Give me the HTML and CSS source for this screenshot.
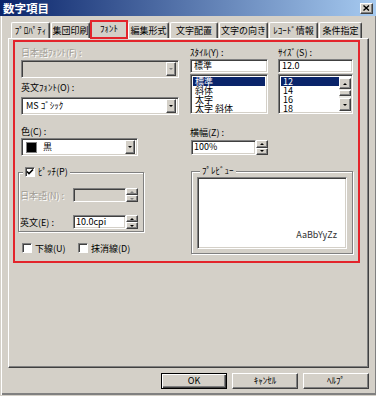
FILE: index.html
```html
<!DOCTYPE html>
<html lang="ja">
<head>
  <meta charset="UTF-8" />
  <title>数字項目</title>
  <link rel="stylesheet" href="styles.css">
</head>
<body>
  <div class="window">
    <div class="titlebar">
      <span class="title">数字項目</span>
      <span class="close">
        <svg width="7" height="6" viewBox="0 0 7 6"><path d="M0.5 0.5 L6 5.5 M6 0.5 L0.5 5.5" stroke="#000" stroke-width="1.4"/></svg>
      </span>
    </div>

    <div class="main">
      <div class="tabs">
        <div class="tab">ﾌﾟﾛﾊﾟﾃｨ</div>
        <div class="tab">集団印刷</div>
        <div class="tab active">ﾌｫﾝﾄ</div>
        <div class="tab">編集形式</div>
        <div class="tab">文字配置</div>
        <div class="tab">文字の向き</div>
        <div class="tab">ﾚｺｰﾄﾞ情報</div>
        <div class="tab">条件指定</div>
      </div>

      <div class="panel">
        <div class="frame">
          <div class="col-left">
            <div class="lbl disabled">日本語ﾌｫﾝﾄ(F) :</div>
            <div class="combo off first">
              <span class="val"></span>
              <span class="drop"><i class="arrow down grey"></i></span>
            </div>

            <div class="lbl gap-a">英文ﾌｫﾝﾄ(O) :</div>
            <div class="combo second">
              <span class="val">MS ｺﾞｼｯｸ</span>
              <span class="drop"><i class="arrow down"></i></span>
            </div>

            <div class="lbl gap-b">色(C) :</div>
            <div class="combo color">
              <span class="swatch"></span>
              <span class="val">黒</span>
              <span class="drop"><i class="arrow down"></i></span>
            </div>

            <fieldset class="group pitch">
              <legend>
                <span class="chk on">
                  <svg width="8" height="8" viewBox="0 0 8 8"><path d="M1 3.5 L3 5.5 L7 1.5" fill="none" stroke="#000" stroke-width="1.6"/></svg>
                </span>
                <span>ﾋﾟｯﾁ(P)</span>
              </legend>
              <div class="row">
                <span class="row-lbl disabled">日本語(N) :</span>
                <span class="field off"></span>
                <span class="spin"><span class="sb"><i class="arrow up grey"></i></span><span class="sb"><i class="arrow down grey"></i></span></span>
              </div>
              <div class="row second-row">
                <span class="row-lbl">英文(E) :</span>
                <span class="field">10.0cpi</span>
                <span class="spin"><span class="sb"><i class="arrow up"></i></span><span class="sb"><i class="arrow down"></i></span></span>
              </div>
            </fieldset>

            <div class="checks">
              <span class="chk"></span><span class="chk-lbl">下線(U)</span>
              <span class="chk"></span><span class="chk-lbl">抹消線(D)</span>
            </div>
          </div>

          <div class="col-right">
            <div class="pair">
              <div class="style-col">
                <div class="lbl">ｽﾀｲﾙ(Y) :</div>
                <div class="edit">標準</div>
                <div class="list">
                  <div class="item sel">標準</div>
                  <div class="item">斜体</div>
                  <div class="item">太字</div>
                  <div class="item">太字 斜体</div>
                </div>
              </div>
              <div class="size-col">
                <div class="lbl">ｻｲｽﾞ(S) :</div>
                <div class="edit">12.0</div>
                <div class="list with-bar">
                  <div class="items">
                    <div class="item sel">12</div>
                    <div class="item">14</div>
                    <div class="item">16</div>
                    <div class="item">18</div>
                  </div>
                  <div class="sbar">
                    <span class="sbtn"><i class="arrow up"></i></span>
                    <span class="thumb"></span>
                    <span class="track"></span>
                    <span class="sbtn low"><i class="arrow down"></i></span>
                  </div>
                </div>
              </div>
            </div>

            <div class="lbl gap-c">横幅(Z) :</div>
            <div class="row width-row">
              <span class="field wide-field">100%</span>
              <span class="spin"><span class="sb"><i class="arrow up"></i></span><span class="sb"><i class="arrow down"></i></span></span>
            </div>

            <fieldset class="group preview">
              <legend>ﾌﾟﾚﾋﾞｭｰ</legend>
              <div class="sample"><span>AaBbYyZz</span></div>
            </fieldset>
          </div>
        </div>
      </div>

      <div class="buttons">
        <div class="btn default">OK</div>
        <div class="btn">ｷｬﾝｾﾙ</div>
        <div class="btn">ﾍﾙﾌﾟ</div>
      </div>
    </div>
  </div>
</body>
</html>
```

FILE: styles.css
```css
* {
  margin: 0;
  padding: 0;
  box-sizing: border-box;
}
body {
  background-color: #d4d0c8;
  font-family: "Noto Sans CJK JP", "Noto Sans", sans-serif;
  font-size: 9px;
  color: #000;
}
.window {
  width: 376px;
  height: 396px;
  overflow: hidden;
}
.titlebar {
  height: 16px;
  background: linear-gradient(to right, #0a246a, #a6caf0);
  display: flex;
  align-items: center;
  justify-content: space-between;
  padding: 0 3px 0 3px;
}
.title {
  color: #fff;
  font-weight: bold;
  font-size: 11.5px;
  line-height: 16px;
}
.close {
  width: 13px;
  height: 11px;
  background-color: #d4d0c8;
  border: 1px solid;
  border-color: #fff #404040 #404040 #fff;
  box-shadow: inset -1px -1px #808080;
  display: flex;
  align-items: center;
  justify-content: center;
}
.main {
  height: 379px;
  padding: 4px 7px 0 7px;
  border-left: 1px solid #d4d0c8;
  box-shadow: inset 1px 0 #fff, inset -1px 0 #808080, inset 0 -2px #808080;
}

/* tabs */
.tabs {
  display: flex;
  align-items: flex-end;
  height: 18px;
  padding-left: 3px;
  gap: 1px;
}
.tab {
  height: 16px;
  line-height: 15px;
  text-align: center;
  border-top: 1px solid #fff;
  border-left: 1px solid #fff;
  border-right: 1px solid #404040;
  border-radius: 2px 2px 0 0;
  box-shadow: inset -1px 0 #808080;
  white-space: nowrap;
  overflow: hidden;
}
.tab:nth-child(1) { width: 39px; }
.tab:nth-child(2) { width: 39px; }
.tab:nth-child(4) { width: 41px; }
.tab:nth-child(5) { width: 48px; }
.tab:nth-child(6) { width: 49px; }
.tab:nth-child(7) { width: 49px; }
.tab:nth-child(8) { width: 43px; }
.tab.active {
  width: 38px;
  height: 19px;
  margin: 0 -1px -1px -1px;
  border: 2px solid #e3242b;
  border-radius: 0;
  box-shadow: none;
  background-color: #d4d0c8;
  line-height: 14px;
  position: relative;
  z-index: 1;
}

/* panel */
.panel {
  height: 330px;
  border: 1px solid;
  border-color: #fff #404040 #404040 #fff;
  box-shadow: inset -1px -1px #808080;
  padding: 1px 0 0 4px;
}
.frame {
  width: 347px;
  height: 223px;
  border: 2px solid #e3242b;
  padding: 5px 0 0 6px;
  display: flex;
  gap: 11px;
}
.col-left {
  width: 158px;
}
.col-right {
  width: 164px;
}
.lbl {
  height: 12px;
  line-height: 12px;
  white-space: nowrap;
}
.disabled {
  color: #a19d95;
  text-shadow: 1px 1px #fff;
}
.gap-a { margin-top: 4px; }
.gap-b { margin-top: 11px; }
.gap-c { margin-top: 13px; }

/* sunken boxes */
.combo,
.edit,
.list,
.field,
.sample {
  background-color: #fff;
  border: 1px solid;
  border-color: #808080 #fff #fff #808080;
  box-shadow: inset 1px 1px #404040, inset -1px -1px #d4d0c8;
}
.combo {
  height: 18px;
  display: flex;
  align-items: center;
  padding: 2px;
}
.combo.first { margin-top: 1px; }
.combo.second { margin-top: 3px; }
.combo.off,
.field.off {
  background-color: #d4d0c8;
}
.combo.color {
  width: 117px;
}
.combo .val {
  flex: 1;
  padding-left: 2px;
  line-height: 12px;
  white-space: nowrap;
}
.swatch {
  width: 11px;
  height: 11px;
  margin-left: 2px;
  background-color: #000;
  border: 1px solid #808080;
}
.combo.color .val {
  padding-left: 6px;
}
.drop,
.sb,
.sbtn,
.thumb,
.btn {
  background-color: #d4d0c8;
  border: 1px solid;
  border-color: #fff #404040 #404040 #fff;
  box-shadow: inset -1px -1px #808080;
}
.drop {
  width: 10px;
  height: 14px;
  display: flex;
  align-items: center;
  justify-content: center;
}
.arrow {
  display: block;
  width: 0;
  height: 0;
  border-left: 2px solid transparent;
  border-right: 2px solid transparent;
}
.arrow.down { border-top: 2px solid #000; }
.arrow.up { border-bottom: 2px solid #000; }
.arrow.down.grey { border-top-color: #808080; }
.arrow.up.grey { border-bottom-color: #808080; }

/* checkbox */
.chk {
  width: 10px;
  height: 10px;
  background-color: #fff;
  border: 1px solid;
  border-color: #808080 #fff #fff #808080;
  box-shadow: inset 1px 1px #404040;
  display: inline-flex;
  align-items: center;
  justify-content: center;
  flex-shrink: 0;
}

/* group boxes */
.group {
  border: 1px solid #808080;
  box-shadow: inset 1px 1px #fff, 1px 1px #fff;
}
.group legend {
  background-color: #d4d0c8;
  line-height: 12px;
  height: 12px;
  white-space: nowrap;
}
.pitch {
  width: 126px;
  height: 66px;
  margin: 10px 0 0 -3px;
  padding: 10px 5px 0 1px;
}
.pitch legend {
  display: flex;
  align-items: center;
  gap: 3px;
  margin-left: 3px;
  padding: 0 2px;
}
.row {
  display: flex;
  align-items: center;
  height: 14px;
}
.second-row {
  margin-top: 13px;
}
.row-lbl {
  width: 53px;
  white-space: nowrap;
}
.field {
  width: 53px;
  height: 14px;
  line-height: 12px;
  padding-left: 2px;
  white-space: nowrap;
}
.spin {
  width: 12px;
  height: 14px;
  display: flex;
  flex-direction: column;
}
.sb {
  flex: 1;
  display: flex;
  align-items: center;
  justify-content: center;
}

.checks {
  display: flex;
  align-items: center;
  margin-top: 10px;
  padding-left: 1px;
  height: 12px;
}
.chk-lbl {
  margin-left: 3px;
  width: 43px;
}

/* right column */
.pair {
  display: flex;
  gap: 10px;
}
.style-col {
  width: 78px;
}
.size-col {
  width: 75px;
}
.edit {
  height: 14px;
  line-height: 12px;
  padding-left: 3px;
}
.list {
  height: 40px;
  margin-top: 1px;
  padding: 2px;
}
.item {
  height: 9px;
  line-height: 9px;
  padding-left: 2px;
  white-space: nowrap;
}
.item.sel {
  background-color: #0a246a;
  color: #fff;
}
.with-bar {
  display: flex;
  padding-right: 1px;
}
.items {
  flex: 1;
}
.sbar {
  width: 12px;
  display: flex;
  flex-direction: column;
  background-color: #ebe9e4;
  margin-top: 1px;
}
.sbtn {
  height: 11px;
  display: flex;
  align-items: center;
  justify-content: center;
}
.sbtn.low {
  height: 13px;
}
.thumb {
  height: 6px;
  margin-top: 1px;
}
.track {
  flex: 1;
}
.width-row {
  margin-top: 1px;
  margin-left: 1px;
  height: 15px;
}
.wide-field {
  width: 65px;
  height: 15px;
}
.width-row .spin {
  height: 15px;
}
.preview {
  width: 162px;
  height: 89px;
  margin: 10px 0 0 1px;
  padding: 0 5px 0 5px;
}
.preview legend {
  margin-left: 3px;
  padding: 0 2px;
}
.sample {
  width: 150px;
  height: 72px;
  display: flex;
  align-items: flex-end;
  justify-content: flex-end;
  padding: 0 9px 8px 0;
  line-height: 10px;
  color: #333;
}

/* buttons */
.buttons {
  display: flex;
  justify-content: flex-end;
  gap: 5px;
  margin-top: 5px;
}
.btn {
  width: 66px;
  height: 16px;
  line-height: 14px;
  text-align: center;
}
.btn.default {
  border: 1px solid #000;
  box-shadow: inset 1px 1px #fff, inset -1px -1px #404040, inset -2px -2px #808080;
}
```
